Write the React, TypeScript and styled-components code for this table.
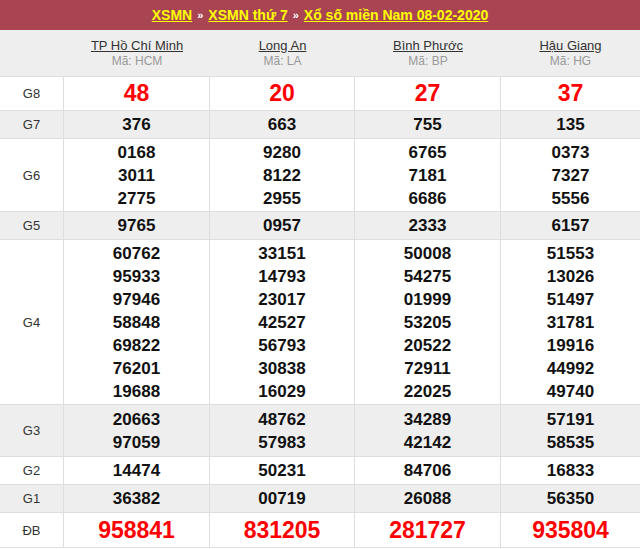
import React from "react";
import styled, { createGlobalStyle } from "styled-components";

const Global = createGlobalStyle`
  html, body { margin: 0; padding: 0; background: #fff; }
  body { font-family: "Liberation Sans", Arial, sans-serif; }
`;

const Wrap = styled.div`
  width: 640px;
  background: #fff;
`;

const TitleBar = styled.div`
  height: 30px;
  background: #a94452;
  display: flex;
  align-items: center;
  justify-content: center;
  gap: 5px;
  font-size: 14px;
  font-weight: bold;
`;

const TitleLink = styled.a`
  color: #ffff00;
  text-decoration: underline;
  cursor: pointer;
`;

const Sep = styled.span`
  color: #fff;
  font-size: 11px;
`;

const Grid = styled.div`
  display: grid;
  grid-template-columns: 64px 146px 145px 146px 1fr;
`;

const HeadRow = styled(Grid)`
  background: #eeeeee;
  height: 46px;
  border-bottom: 1px solid #dedede;
`;

const HeadCell = styled.div`
  display: flex;
  flex-direction: column;
  align-items: center;
  justify-content: center;
  padding-top: 1px;
`;

const City = styled.a`
  font-size: 13px;
  color: #333;
  text-decoration: underline;
  line-height: 16px;
`;

const Code = styled.span`
  font-size: 12px;
  color: #999;
  line-height: 15px;
`;

const Row = styled(Grid)<{ $alt?: boolean; $min: number }>`
  background: ${(p) => (p.$alt ? "#eeeeee" : "#ffffff")};
  border-bottom: 1px solid #dedede;
  min-height: ${(p) => p.$min}px;
`;

const Label = styled.div`
  display: flex;
  align-items: center;
  justify-content: center;
  font-size: 13px;
  color: #333;
  border-right: 1px solid #dedede;
`;

const Cell = styled.div<{ $last?: boolean }>`
  display: flex;
  flex-direction: column;
  align-items: center;
  justify-content: center;
  padding: 1.5px 0;
  border-right: ${(p) => (p.$last ? "none" : "1px solid #dedede")};
`;

const Num = styled.span<{ $red?: boolean; $big?: boolean }>`
  font-weight: bold;
  font-size: ${(p) => (p.$big ? "23px" : "17px")};
  line-height: ${(p) => (p.$big ? "29px" : "23px")};
  color: ${(p) => (p.$red ? "#ff0000" : "#111")};
`;

const cities = [
  { name: "TP Hồ Chí Minh", code: "HCM" },
  { name: "Long An", code: "LA" },
  { name: "Bình Phước", code: "BP" },
  { name: "Hậu Giang", code: "HG" },
];

type Prize = { label: string; alt?: boolean; red?: boolean; big?: boolean; min: number; cols: string[][] };

const prizes: Prize[] = [
  { label: "G8", red: true, big: true, min: 33, cols: [["48"], ["20"], ["27"], ["37"]] },
  { label: "G7", alt: true, min: 27, cols: [["376"], ["663"], ["755"], ["135"]] },
  {
    label: "G6",
    min: 27,
    cols: [
      ["0168", "3011", "2775"],
      ["9280", "8122", "2955"],
      ["6765", "7181", "6686"],
      ["0373", "7327", "5556"],
    ],
  },
  { label: "G5", alt: true, min: 27, cols: [["9765"], ["0957"], ["2333"], ["6157"]] },
  {
    label: "G4",
    min: 27,
    cols: [
      ["60762", "95933", "97946", "58848", "69822", "76201", "19688"],
      ["33151", "14793", "23017", "42527", "56793", "30838", "16029"],
      ["50008", "54275", "01999", "53205", "20522", "72911", "22025"],
      ["51553", "13026", "51497", "31781", "19916", "44992", "49740"],
    ],
  },
  {
    label: "G3",
    alt: true,
    min: 51,
    cols: [
      ["20663", "97059"],
      ["48762", "57983"],
      ["34289", "42142"],
      ["57191", "58535"],
    ],
  },
  { label: "G2", min: 27, cols: [["14474"], ["50231"], ["84706"], ["16833"]] },
  { label: "G1", alt: true, min: 27, cols: [["36382"], ["00719"], ["26088"], ["56350"]] },
  { label: "ĐB", red: true, big: true, min: 34, cols: [["958841"], ["831205"], ["281727"], ["935804"]] },
];

export default function App() {
  return (
    <Wrap>
      <Global />
      <TitleBar>
        <TitleLink>XSMN</TitleLink>
        <Sep>»</Sep>
        <TitleLink>XSMN thứ 7</TitleLink>
        <Sep>»</Sep>
        <TitleLink>Xổ số miền Nam 08-02-2020</TitleLink>
      </TitleBar>
      <HeadRow>
        <HeadCell />
        {cities.map((c) => (
          <HeadCell key={c.code}>
            <City>{c.name}</City>
            <Code>Mã: {c.code}</Code>
          </HeadCell>
        ))}
      </HeadRow>
      {prizes.map((p) => (
        <Row key={p.label} $alt={p.alt} $min={p.min}>
          <Label>{p.label}</Label>
          {p.cols.map((col, i) => (
            <Cell key={i} $last={i === 3}>
              {col.map((n) => (
                <Num key={n} $red={p.red} $big={p.big}>
                  {n}
                </Num>
              ))}
            </Cell>
          ))}
        </Row>
      ))}
    </Wrap>
  );
}
